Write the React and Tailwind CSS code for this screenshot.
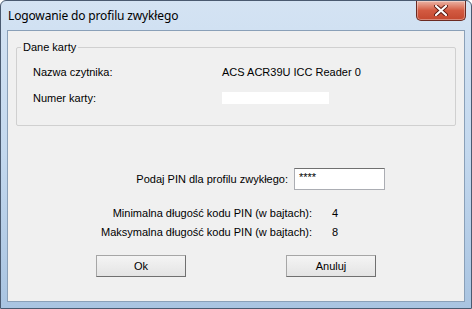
import React from 'react';

const titleFont = { fontFamily: '"Noto Sans", "Open Sans", sans-serif' };
const bodyFont = { fontFamily: '"Liberation Sans", Arial, sans-serif' };

const CloseButton = () => (
  <div className="w-[50px] h-[20px] rounded-b-[5px] border border-t-0 border-[#6b2a22] bg-gradient-to-b from-[#eab3a5] via-[#d35a41] to-[#c4482f] flex items-center justify-center shadow-[inset_0_0_0_1px_rgba(255,255,255,0.35)]">
    <svg width="14" height="11" viewBox="0 0 14 11">
      <path d="M2 1 L12 10 M12 1 L2 10" stroke="#5a1a12" strokeWidth="4" strokeLinecap="round" />
      <path d="M2 1 L12 10 M12 1 L2 10" stroke="#ffffff" strokeWidth="2.2" strokeLinecap="round" />
    </svg>
  </div>
);

const Button = ({ children }) => (
  <button className="w-[90px] h-[22px] bg-gradient-to-b from-[#f4f4f4] to-[#e4e4e4] border border-[#a6a6a6] border-r-[#707070] border-b-[#707070] text-[11px] text-black flex items-center justify-center">
    {children}
  </button>
);

export default function App() {
  return (
    <div className="w-[472px] h-[309px] flex flex-col bg-gradient-to-b from-[#d4e3f3] via-[#c3d8ee] to-[#a9c4e1] border border-[#4a5a70] rounded-t-[6px] overflow-hidden">
      <div className="h-[29px] flex items-start justify-between pl-[7px] pr-[5px]">
        <span className="text-[12px] text-black leading-none mt-[9px] tracking-[-0.15px]" style={titleFont}>
          Logowanie do profilu zwykłego
        </span>
        <CloseButton />
      </div>

      <div
        className="flex-1 mx-[6px] mb-[6px] border border-[#8aa0b8] bg-[#f0f0f0] px-[8px] pt-[8px] text-[11px] text-black flex flex-col"
        style={bodyFont}
      >
        <fieldset className="border border-[#d0d0d0] rounded-[2px] pl-[4px] pr-[8px] pb-[13px] h-[87px]">
          <legend className="px-[2px] text-[11px] leading-[16px]">Dane karty</legend>
          <div className="grid grid-cols-[189px_1fr] gap-y-[10px] mt-[9px] pl-[12px]">
            <span className="leading-[16px]">Nazwa czytnika:</span>
            <span className="leading-[16px]">ACS ACR39U ICC Reader 0</span>
            <span className="leading-[16px]">Numer karty:</span>
            <div className="w-[107px] h-[12px] bg-white mt-[2px]" />
          </div>
        </fieldset>

        <div className="flex items-center mt-[42px]">
          <span className="w-[272px] text-right leading-[16px]">Podaj PIN dla profilu zwykłego:</span>
          <div className="ml-[6px] w-[91px] h-[22px] bg-white border border-[#abadb3] border-t-[#707070] pl-[4px] text-[11px] leading-[16px]">
            ****
          </div>
        </div>

        <div className="flex flex-col mt-[15px] gap-[3px]">
          <div className="flex">
            <span className="w-[296px] text-right leading-[16px]">Minimalna długość kodu PIN (w bajtach):</span>
            <span className="ml-[20px] leading-[16px]">4</span>
          </div>
          <div className="flex">
            <span className="w-[296px] text-right leading-[16px]">Maksymalna długość kodu PIN (w bajtach):</span>
            <span className="ml-[20px] leading-[16px]">8</span>
          </div>
        </div>

        <div className="flex mt-[15px] pl-[80px] gap-[100px]">
          <Button>Ok</Button>
          <Button>Anuluj</Button>
        </div>
      </div>
    </div>
  );
}
